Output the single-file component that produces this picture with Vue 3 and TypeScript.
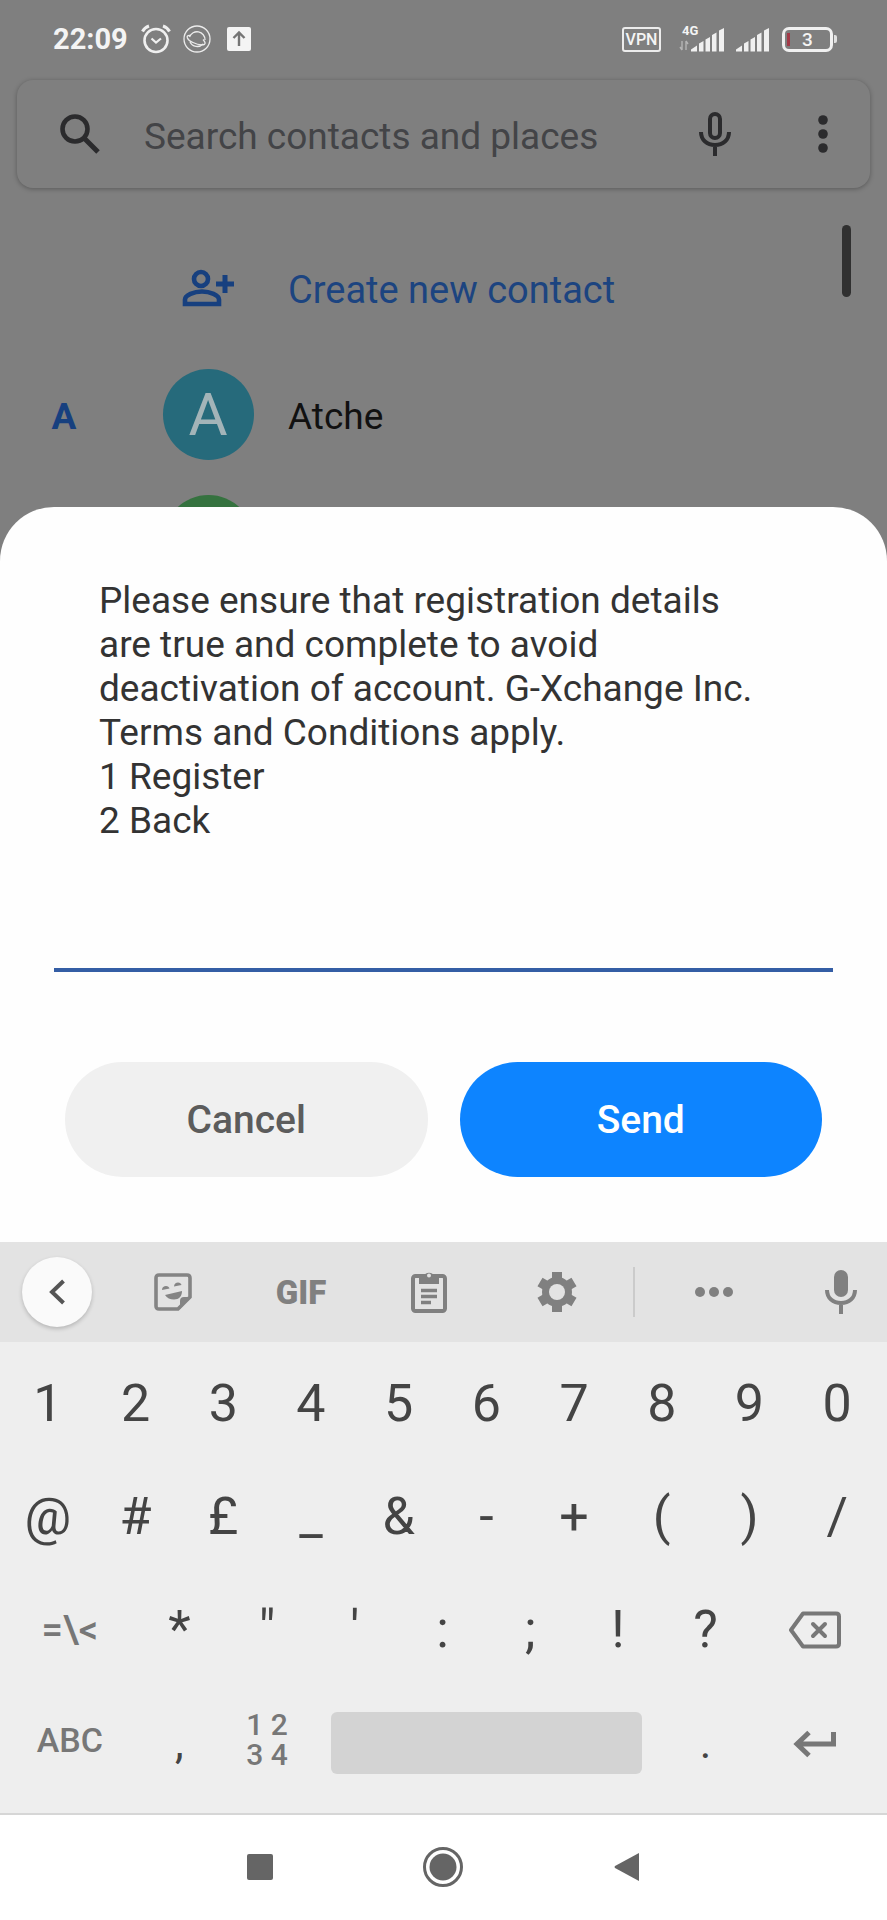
<script setup lang="ts">
import { ref } from 'vue'

interface Contact {
  index: string
  initial: string
  name: string
  tone: string
}

const contacts: Contact[] = [
  { index: 'A', initial: 'A', name: 'Atche', tone: 'teal' },
  { index: '', initial: '', name: '', tone: 'green' },
]

const numberKeys: string[] = ['1', '2', '3', '4', '5', '6', '7', '8', '9', '0']
const symbolKeys: string[] = ['@', '#', '£', '_', '&', '-', '+', '(', ')', '/']
const punctuationKeys: string[] = ['*', '"', "'", ':', ';', '!', '?']

const search = ref('')
const reply = ref('')

function type(key: string): void {
  reply.value += key
}

function backspace(): void {
  reply.value = reply.value.slice(0, -1)
}
</script>

<template>
  <div class="phone">
    <header class="status">
      <div class="status-group">
        <span class="clock">22:09</span>
        <svg class="s-alarm" width="30" height="30" viewBox="0 0 30 30" fill="none" stroke="#f0f0f0">
          <circle cx="15" cy="16.500" r="11.500" stroke-width="2.600" />
          <path d="M10.500 14.500l4.500 4 5-4" stroke-width="2.200" />
          <path d="M1.500 7.500C3 4.500 5 3 8 2M28.500 7.500C27 4.500 25 3 22 2" stroke-width="3" />
        </svg>
        <svg class="s-globe" width="28" height="28" viewBox="0 0 28 28" fill="none" stroke="#ececec" stroke-width="1.300">
          <circle cx="14" cy="14" r="13" />
          <path d="M6.500 12a8 8 0 0 1 15.500 3M7 17a8 8 0 0 0 13 2" />
          <path d="M7 10.500C2 10 4 15 10 17.500c6 3 13 3.500 12 0-.3-1-1-2-2-3" />
        </svg>
        <svg class="s-upload" width="24" height="24" viewBox="0 0 24 24">
          <rect width="24" height="24" rx="2" fill="#f4f4f4" />
          <path d="M12 19V6M6.500 11L12 5.500l5.500 5.500" fill="none" stroke="#757575" stroke-width="2.400" />
        </svg>
      </div>
      <div class="status-group">
        <span class="vpn">VPN</span>
        <span class="network">
          <span class="gen">4G</span>
          <svg width="47" height="25" viewBox="0 0 47 25">
            <path d="M3 14v9M1 20l2 3M7 23v-9M7 14l2 3" stroke="#b5b5b5" stroke-width="1.400" fill="none" />
            <path d="M12 24.500v-2l6-4v6zM20 24.500v-8l4.500-2.500v10.500zM26.500 24.500v-12l4.500-2.500v14.500zM33 24.500V8l4.500-2.500v19zM40 24.500V3.500L45 1v23.500z" fill="#f0f0f0" />
          </svg>
        </span>
        <svg class="s-signal" width="35" height="25" viewBox="11 0 35 25">
          <path d="M12 24.500v-2l6-4v6zM20 24.500v-8l4.500-2.500v10.500zM26.500 24.500v-12l4.500-2.500v14.500zM33 24.500V8l4.500-2.500v19zM40 24.500V3.500L45 1v23.500z" fill="#f0f0f0" />
        </svg>
        <span class="battery"><span class="charge"></span>3</span>
        <span class="nub"></span>
      </div>
    </header>

    <form class="search" @submit.prevent>
      <svg class="search-icon" width="40" height="40" viewBox="0 0 40 40" fill="none" stroke="#2b2b2d">
        <circle cx="15" cy="15" r="12.500" stroke-width="4.600" />
        <path d="M24 24l14 14" stroke-width="5" />
      </svg>
      <input v-model="search" class="search-input" type="text" aria-label="Search contacts and places" placeholder="Search contacts and places" />
      <button class="bare" type="button" aria-label="Voice search">
        <svg width="32" height="44" viewBox="0 0 32 44" fill="none" stroke="#2b2b2d" stroke-width="4">
          <rect x="11" y="2" width="10" height="24" rx="5" />
          <path d="M2 20c0 8 6 13 14 13s14-5 14-13M16 33v11" />
        </svg>
      </button>
      <button class="bare more" type="button" aria-label="More options">
        <svg width="10" height="38" viewBox="0 0 10 38" fill="#2b2b2d">
          <circle cx="5" cy="5" r="4.800" /><circle cx="5" cy="19" r="4.800" /><circle cx="5" cy="33" r="4.800" />
        </svg>
      </button>
    </form>

    <main class="list">
      <span class="thumb"></span>
      <a class="row create" href="#">
        <span class="row-icon">
          <svg width="52" height="38" viewBox="0 0 52 38" fill="none" stroke="#17407f" stroke-width="4.600">
            <circle cx="19" cy="10" r="7" />
            <path d="M3 35v-4.500C3 26 12 22.500 20 22.500S37 26 37 30.500V35z" />
            <path d="M43 6v18M34 15h18" stroke-width="5" />
          </svg>
        </span>
        <span class="name">Create new contact</span>
      </a>
      <div v-for="contact in contacts" :key="contact.tone" class="row">
        <span class="index">{{ contact.index }}</span>
        <span class="avatar" :class="contact.tone">{{ contact.initial }}</span>
        <span class="name">{{ contact.name }}</span>
      </div>
    </main>

    <section class="sheet" role="dialog" aria-labelledby="ussd-message">
      <p id="ussd-message" class="message">Please ensure that registration details are true and complete to avoid deactivation of account. G-Xchange Inc. Terms and Conditions apply.<br />1 Register<br />2 Back</p>
      <input v-model="reply" class="reply" type="text" aria-label="Reply" />
      <div class="actions">
        <button class="action cancel" type="button">Cancel</button>
        <button class="action send" type="button">Send</button>
      </div>
    </section>

    <section class="keyboard" aria-label="Keyboard">
      <div class="tools">
        <button class="bare collapse" type="button" aria-label="Back">
          <svg width="18" height="26" viewBox="0 0 18 26" fill="none" stroke="#555" stroke-width="4"><path d="M15.500 2L4 13l11.500 11" /></svg>
        </button>
        <div class="tool-set">
          <button class="bare" type="button" aria-label="Stickers">
            <svg width="38" height="38" viewBox="0 0 38 38">
              <path d="M5 2h28q3 0 3 3v19L24 36H5q-3 0-3-3V5q0-3 3-3z" fill="none" stroke="#848484" stroke-width="3.600" />
              <path d="M36 24h-6q-4 0-4 4v8z" fill="#848484" />
              <path d="M11 22l17-4c0 5-3 8.500-8 8.500-4 0-7-1.500-9-4.500z" fill="#848484" />
              <path d="M8 17c0-3 2-4 4-4s3 1 3.500 2.500zM20 13.500c0-2.500 2-4 4-4s3 1 3.500 2.500z" fill="#848484" />
            </svg>
          </button>
          <button class="bare gif" type="button">GIF</button>
          <button class="bare" type="button" aria-label="Clipboard">
            <svg width="36" height="44" viewBox="0 0 36 44">
              <rect x="2" y="6" width="32" height="35" rx="2.500" fill="none" stroke="#808080" stroke-width="4" />
              <path d="M8 6h5a5.500 5.500 0 0 1 10 0h5v8H8z" fill="#808080" />
              <circle cx="18" cy="5.500" r="2" fill="#e3e3e3" />
              <path d="M10 20.500h16M10 26.500h16M10 32.500h10" stroke="#808080" stroke-width="3.400" />
            </svg>
          </button>
          <button class="bare" type="button" aria-label="Settings">
            <svg width="40" height="42" viewBox="0 0 40 42">
              <path d="M20 1v40M3 11l34 20M37 11L3 31" stroke="#808080" stroke-width="10" />
              <circle cx="20" cy="21" r="11.500" fill="none" stroke="#808080" stroke-width="7" />
              <circle cx="20" cy="21" r="8" fill="#e3e3e3" />
            </svg>
          </button>
        </div>
        <span class="divider"></span>
        <div class="tool-end">
          <button class="bare" type="button" aria-label="More tools">
            <svg width="40" height="12" viewBox="0 0 40 12" fill="#808080"><circle cx="6" cy="6" r="5" /><circle cx="20" cy="6" r="5" /><circle cx="34" cy="6" r="5" /></svg>
          </button>
          <button class="bare" type="button" aria-label="Voice typing">
            <svg width="32" height="44" viewBox="0 0 32 44">
              <rect x="9" y="0" width="14" height="27" rx="7" fill="#808080" />
              <path d="M2 20c0 8 6 13 14 13s14-5 14-13M16 33v11" fill="none" stroke="#808080" stroke-width="4" />
            </svg>
          </button>
        </div>
      </div>

      <div class="keys">
        <button v-for="key in numberKeys" :key="key" class="key" type="button" @click="type(key)">{{ key }}</button>
        <button v-for="key in symbolKeys" :key="key" class="key" type="button" @click="type(key)">{{ key }}</button>

        <button class="key wide more-symbols" type="button">=\&lt;</button>
        <button v-for="key in punctuationKeys" :key="key" class="key" type="button" @click="type(key)">{{ key }}</button>
        <button class="key wide" type="button" aria-label="Backspace" @click="backspace">
          <svg width="52" height="38" viewBox="0 0 52 38" fill="none" stroke="#777" stroke-width="4" stroke-linejoin="round">
            <path d="M14 2.500h33q3 0 3 3v27q0 3-3 3H14L2 19z" />
            <path d="M24 13l12 12M36 13L24 25" stroke-linecap="round" />
          </svg>
        </button>

        <button class="key wide letters" type="button">ABC</button>
        <button class="key small" type="button" @click="type(',')">,</button>
        <button class="key digits" type="button">1 2<br />3 4</button>
        <button class="key space" type="button" aria-label="Space" @click="type(' ')"><span class="space-bar"></span></button>
        <button class="key small" type="button" @click="type('.')">.</button>
        <button class="key wide" type="button" aria-label="Enter">
          <svg width="44" height="30" viewBox="0 0 44 30" fill="none" stroke="#777" stroke-width="5"><path d="M40.500 4v12H4M16 4.500L4 16l12 11.500" /></svg>
        </button>
      </div>
    </section>

    <nav class="nav" aria-label="System navigation">
      <button class="bare" type="button" aria-label="Recent apps">
        <svg width="28" height="28" viewBox="0 0 28 28"><rect x="1" y="1" width="26" height="26" rx="2" fill="#656565" /></svg>
      </button>
      <button class="bare" type="button" aria-label="Home">
        <svg width="42" height="42" viewBox="0 0 42 42"><circle cx="21" cy="21" r="18.500" fill="none" stroke="#656565" stroke-width="3" /><circle cx="21" cy="21" r="13.500" fill="#656565" /></svg>
      </button>
      <button class="bare" type="button" aria-label="Go back">
        <svg width="28" height="32" viewBox="0 0 28 32"><path d="M26 2v28L2 17q-1-1 0-2z" fill="#656565" /></svg>
      </button>
    </nav>
  </div>
</template>

<style>
body {
  margin: 0;
  background: #fff;
}
</style>

<style scoped>
.phone {
  display: flex;
  flex-direction: column;
  min-height: 100vh;
  background: #7f7f7f;
  color: #111;
  font-family: Roboto, "Liberation Sans", sans-serif;
  overflow: hidden;
}

.phone * {
  box-sizing: border-box;
}

svg {
  display: block;
  flex: none;
}

button,
input {
  border: 0;
  padding: 0;
  background: none;
  font-family: inherit;
  outline: none;
}

.bare {
  display: flex;
  align-items: center;
  justify-content: center;
}

.status {
  display: flex;
  justify-content: space-between;
  align-items: center;
  height: 80px;
  padding: 0 50px 2px 53px;
  color: #f4f4f4;
}

.status-group {
  display: flex;
  align-items: center;
}

.clock {
  font-size: 29px;
  font-weight: 700;
}

.s-alarm {
  margin-left: 13px;
}

.s-globe {
  margin-left: 12px;
}

.s-upload {
  margin-left: 16px;
}

.vpn {
  width: 39px;
  height: 25px;
  border: 2px solid #ececec;
  border-radius: 3px;
  font-size: 16px;
  font-weight: 500;
  line-height: 21px;
  text-align: center;
}

.network {
  position: relative;
  margin-left: 18px;
}

.gen {
  position: absolute;
  left: 3px;
  top: -3px;
  font-size: 13px;
  font-weight: 700;
  line-height: 14px;
}

.s-signal {
  margin-left: 9px;
}

.battery {
  position: relative;
  width: 51px;
  height: 25px;
  margin-left: 12px;
  border: 3px solid #f0f0f0;
  border-radius: 7px;
  font-size: 19px;
  font-weight: 500;
  line-height: 20px;
  text-align: center;
}

.charge {
  position: absolute;
  left: 2px;
  top: 3px;
  width: 3px;
  height: 13px;
  background: #a33a48;
}

.nub {
  width: 3px;
  height: 8px;
  margin-left: 1px;
  border-radius: 0 2px 2px 0;
  background: #e0e0e0;
}

.search {
  display: flex;
  align-items: center;
  height: 108px;
  margin: 0 17px;
  padding: 0 42px 0 43px;
  border-radius: 16px;
  background: #7f7f7f;
  box-shadow: 0 1px 5px rgba(0, 0, 0, 0.3);
}

.search-input {
  flex: 1;
  min-width: 0;
  height: 60px;
  margin-left: 44px;
  padding-top: 5px;
  color: #3a3b3e;
  font-size: 37px;
}

.search-input::placeholder {
  color: #434447;
  opacity: 1;
}

.more {
  margin-left: 87px;
}

.list {
  position: relative;
  padding-top: 37px;
}

.thumb {
  position: absolute;
  right: 36px;
  top: 37px;
  width: 9px;
  height: 72px;
  border-radius: 5px;
  background: #303030;
}

.row {
  display: grid;
  grid-template-columns: 128px 160px 1fr;
  align-items: center;
  height: 126px;
  color: #111;
  font-size: 37px;
  text-decoration: none;
}

.name,
.index {
  padding-top: 4px;
}

.row.create {
  color: #1c4480;
  font-size: 38px;
}

.row-icon {
  grid-column: 2;
  justify-self: center;
}

.index {
  color: #17407f;
  font-weight: 700;
  text-align: center;
}

.avatar {
  display: flex;
  align-items: center;
  justify-content: center;
  justify-self: center;
  width: 91px;
  height: 91px;
  border-radius: 50%;
  color: #a3b4b8;
  font-size: 60px;
}

.teal {
  background: #266a7b;
}

.green {
  background: #35723f;
}

.sheet {
  position: relative;
  margin-top: -96px;
  padding: 72px 54px 65px;
  border-radius: 54px 54px 0 0;
  background: #fefefe;
}

.message {
  margin: 0;
  padding: 0 64px 0 45px;
  color: #333;
  font-size: 37px;
  line-height: 44px;
}

.reply {
  display: block;
  width: 100%;
  height: 92px;
  margin-top: 37px;
  padding: 0 45px;
  border-bottom: 4px solid #345ea5;
  color: #333;
  font-size: 37px;
}

.actions {
  display: grid;
  grid-template-columns: 1fr 1fr;
  gap: 32px;
  margin-top: 90px;
  padding: 0 11px;
}

.action {
  height: 115px;
  border-radius: 58px;
  font-size: 39px;
  font-weight: 500;
}

.cancel {
  background: #f0f0f0;
  color: #5c5c5c;
}

.send {
  background: #0d84ff;
  color: #fff;
}

.keyboard {
  background: #eee;
  border-bottom: 2px solid #d6d6d6;
}

.tools {
  display: flex;
  align-items: center;
  height: 100px;
  background: #e3e3e3;
}

.collapse {
  width: 70px;
  height: 70px;
  margin-left: 22px;
  border-radius: 50%;
  background: #fafafa;
  box-shadow: 0 2px 4px rgba(0, 0, 0, 0.2);
}

.tool-set {
  display: grid;
  grid-template-columns: repeat(4, 1fr);
  flex: 512;
  margin-left: 17px;
}

.gif {
  color: #808080;
  font-size: 33px;
  font-weight: 900;
}

.divider {
  width: 2px;
  height: 50px;
  margin-left: 12px;
  background: #cbcbcb;
}

.tool-end {
  display: grid;
  grid-template-columns: 1fr 1fr;
  flex: 254;
  margin-left: 15px;
  margin-right: -17px;
}

.keys {
  display: grid;
  grid-template-columns: repeat(20, 1fr);
  grid-auto-rows: 113px;
  padding: 5px 6px 14px 4px;
}

.key {
  display: flex;
  grid-column: span 2;
  align-items: center;
  justify-content: center;
  color: #444;
  font-size: 52px;
}

.wide {
  grid-column: span 3;
}

.more-symbols {
  color: #777;
  font-size: 38px;
  font-weight: 500;
}

.letters {
  padding-bottom: 5px;
  color: #777;
  font-size: 34px;
  font-weight: 500;
}

.small {
  font-size: 44px;
}

.digits {
  display: block;
  padding-bottom: 5px;
  color: #777;
  font-size: 30px;
  font-weight: 500;
  line-height: 30px;
  text-align: center;
}

.space {
  grid-column: span 8;
  padding: 0 20px;
}

.space-bar {
  width: 100%;
  height: 62px;
  border-radius: 6px;
  background: #d3d3d3;
}

.nav {
  display: grid;
  flex: 1;
  grid-template-columns: repeat(3, 1fr);
  align-items: center;
  min-height: 104px;
  padding: 0 19% 2px;
  background: #fff;
}
</style>
